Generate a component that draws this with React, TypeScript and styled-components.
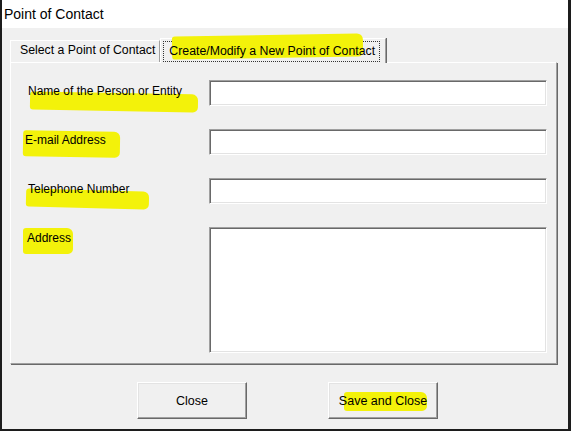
import React, { FC } from "react";
import styled, { createGlobalStyle } from "styled-components";

const GlobalStyle = createGlobalStyle`
  body {
    margin: 0;
    background: #ffffff;
    font-family: "Liberation Sans", Arial, sans-serif;
    color: #000;
  }
`;

const HIGHLIGHT = "#f3f20a";

const Window = styled.div`
  width: 571px;
  height: 431px;
  box-sizing: border-box;
  display: flex;
  flex-direction: column;
  background: #f0f0f0;
  border-left: 2px solid #1c1c1c;
  border-right: 3px solid #1c1c1c;
  border-bottom: 2px solid #1c1c1c;
  overflow: hidden;
`;

const TitleBar = styled.div`
  height: 28px;
  display: flex;
  align-items: center;
  padding-left: 2px;
  background: #ffffff;
  font-size: 14px;
`;

const Body = styled.div`
  display: flex;
  flex-direction: column;
  padding: 10px 11px 0 8px;
`;

const TabRow = styled.div`
  display: flex;
  align-items: flex-end;
  height: 24px;
  position: relative;
  z-index: 1;
`;

const Tab = styled.div<{ $active?: boolean }>`
  position: relative;
  box-sizing: border-box;
  height: ${({ $active }) => ($active ? "25px" : "22px")};
  margin-bottom: ${({ $active }) => ($active ? "-1px" : "0")};
  padding: ${({ $active }) => ($active ? "2px 5px 0 2px" : "2px 4px 0 9px")};
  display: flex;
  align-items: flex-start;
  font-size: 12.3px;
  background: #f0f0f0;
  border-top: 1px solid #ffffff;
  border-left: 1px solid #ffffff;
  border-right: 1px solid #a0a0a0;
  box-shadow: 1px 0 0 #696969;
`;

const TabLabel = styled.span<{ $focused?: boolean }>`
  position: relative;
  padding: 2px 4px 3px 5px;
  border: 1px dotted ${({ $focused }) => ($focused ? "#333" : "transparent")};
`;

const Mark = styled.span<{
  $top: number;
  $left: number;
  $right: number;
  $bottom: number;
  $tilt?: number;
}>`
  position: relative;
  &::before {
    content: "";
    position: absolute;
    top: ${({ $top }) => $top}px;
    left: ${({ $left }) => $left}px;
    right: ${({ $right }) => $right}px;
    bottom: ${({ $bottom }) => $bottom}px;
    background: ${HIGHLIGHT};
    border-radius: 3px 6px 5px 3px;
    transform: rotate(${({ $tilt }) => $tilt || 0}deg);
    z-index: -1;
  }
`;

const MarkText = styled.span`
  position: relative;
  isolation: isolate;
  display: inline-block;
`;

const Panel = styled.div`
  box-sizing: border-box;
  height: 302px;
  width: 547px;
  padding: 17px 9px 10px 17px;
  display: grid;
  grid-template-columns: 181px 1fr;
  grid-template-rows: 26px 26px 26px 126px;
  row-gap: 23px;
  border-top: 1px solid #ffffff;
  border-left: 1px solid #ffffff;
  border-right: 1px solid #a0a0a0;
  border-bottom: 1px solid #a0a0a0;
  box-shadow: 1px 1px 0 #696969;
`;

const FieldLabel = styled.div<{ $shift?: number }>`
  font-size: 12px;
  padding-top: 4px;
  margin-left: ${({ $shift }) => $shift || 0}px;
  isolation: isolate;
`;

const sunken = `
  box-sizing: border-box;
  background: #ffffff;
  border-top: 1px solid #a0a0a0;
  border-left: 1px solid #a0a0a0;
  border-right: 1px solid #ffffff;
  border-bottom: 1px solid #ffffff;
  box-shadow: inset 1px 1px 0 #696969, inset -1px -1px 0 #e3e3e3;
  outline: none;
  font-family: inherit;
  font-size: 12px;
  margin: 0;
`;

const TextBox = styled.input`
  ${sunken}
  width: 100%;
  height: 26px;
`;

const TextArea = styled.textarea`
  ${sunken}
  width: 100%;
  height: 126px;
  resize: none;
`;

const ButtonRow = styled.div`
  display: flex;
  justify-content: center;
  gap: 81px;
  padding: 18px 0 0 8px;
`;

const Button = styled.button`
  width: 110px;
  height: 37px;
  box-sizing: border-box;
  background: #f0f0f0;
  font-family: inherit;
  font-size: 12.5px;
  color: #000;
  padding: 0;
  border-top: 1px solid #ffffff;
  border-left: 1px solid #ffffff;
  border-right: 1px solid #696969;
  border-bottom: 1px solid #696969;
  box-shadow: inset -1px -1px 0 #a0a0a0, inset 1px 1px 0 #e3e3e3;
  isolation: isolate;
`;

// highlighter strokes: [top, left, right, bottom, tilt] relative to the label text
const FIELDS = [
  { label: "Name of the Person or Entity", shift: 0, mark: [9, 2, -16, -13, 1] },
  { label: "E-mail Address", shift: -3, mark: [-2, -2, -14, -10, 1] },
  { label: "Telephone Number", shift: 0, mark: [8, -2, -20, -12, 1.5] },
  { label: "Address", shift: -1, mark: [-3, -4, -2, -9, 0] },
];

const App: FC = () => {
  return (
    <>
      <GlobalStyle />
      <Window>
        <TitleBar>Point of Contact</TitleBar>
        <Body>
          <TabRow>
            <Tab>Select a Point of Contact</Tab>
            <Tab $active>
              <TabLabel $focused>
                <MarkText>
                  <Mark $top={-9} $left={3} $right={12} $bottom={0} $tilt={-1}>
                    Create/Modify a New Point of Contact
                  </Mark>
                </MarkText>
              </TabLabel>
            </Tab>
          </TabRow>
          <Panel>
            {FIELDS.map((f, i) => {
              const [t, l, r, b, tilt] = f.mark;
              return (
                <React.Fragment key={f.label}>
                  <FieldLabel $shift={f.shift}>
                    <MarkText>
                      <Mark $top={t} $left={l} $right={r} $bottom={b} $tilt={tilt}>
                        {f.label}
                      </Mark>
                    </MarkText>
                  </FieldLabel>
                  {i < 3 ? <TextBox type="text" /> : <TextArea />}
                </React.Fragment>
              );
            })}
          </Panel>
          <ButtonRow>
            <Button>Close</Button>
            <Button>
              <MarkText>
                <Mark $top={-2} $left={5} $right={0} $bottom={-3}>
                  Save and Close
                </Mark>
              </MarkText>
            </Button>
          </ButtonRow>
        </Body>
      </Window>
    </>
  );
};

export default App;
